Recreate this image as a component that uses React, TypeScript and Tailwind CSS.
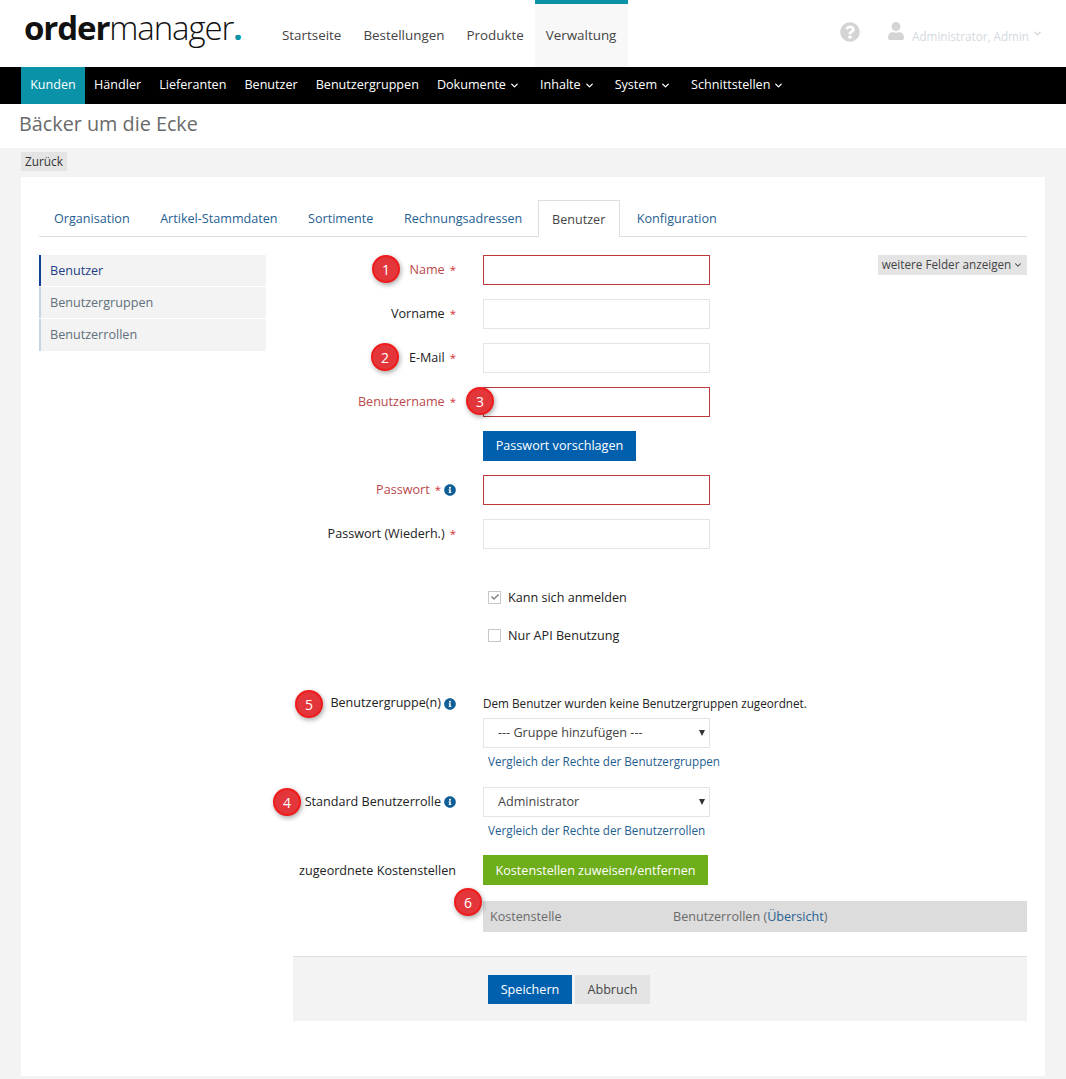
import React from "react";
import { FaQuestionCircle, FaUser, FaInfoCircle, FaCheck } from "react-icons/fa";
import { ChevronDown } from "lucide-react";

const topNav = ["Startseite", "Bestellungen", "Produkte"];
const blackNav: [string, boolean][] = [
  ["Händler", false],
  ["Lieferanten", false],
  ["Benutzer", false],
  ["Benutzergruppen", false],
  ["Dokumente", true],
  ["Inhalte", true],
  ["System", true],
  ["Schnittstellen", true],
];
const tabs = ["Organisation", "Artikel-Stammdaten", "Sortimente", "Rechnungsadressen"];

function Badge({ n, className }: { n: number; className: string }) {
  return (
    <span
      className={`absolute flex h-[28px] w-[28px] items-center justify-center rounded-full border-[2px] border-[#f01c1c] bg-[#e2363b] text-[14px] text-white shadow-[1px_2px_5px_rgba(0,0,0,0.35)] ${className}`}
    >
      {n}
    </span>
  );
}

function Info() {
  return <FaInfoCircle className="inline-block text-[12px] text-[#0f5f96]" />;
}

function Field({
  label,
  error,
  info,
  badge,
}: {
  label: string;
  error?: boolean;
  info?: boolean;
  badge?: React.ReactNode;
}) {
  return (
    <div className="relative flex h-[30px] items-center">
      <div className={`flex w-[163px] items-center justify-end ${error ? "text-[#b9484b]" : "text-[#222]"}`}>
        <span>{label}</span>
        <span className="ml-[5px] text-[11.5px] text-[#d0343a]">*</span>
        {info && <span className="ml-[3px] flex"><Info /></span>}
      </div>
      <input
        className={`ml-[27px] h-[30px] w-[227px] border bg-white ${error ? "border-[#b9393c]" : "border-[#e4e4e4]"}`}
      />
      {badge}
    </div>
  );
}

function Select({ value }: { value: string }) {
  return (
    <div className="relative h-[30px] w-[227px]">
      <select className="h-full w-full appearance-none border border-[#e4e4e4] bg-white pl-[14px] text-[12.6px] text-[#444]">
        <option>{value}</option>
      </select>
      <span className="absolute right-[5px] top-[12px] h-0 w-0 border-x-[3px] border-t-[6px] border-x-transparent border-t-[#333]" />
    </div>
  );
}

function Check({ checked, label }: { checked?: boolean; label: string }) {
  return (
    <div className="ml-[190px] flex h-[20px] items-center">
      <span className="ml-[5px] flex h-[13px] w-[13px] items-center justify-center border border-[#c8c8c8] bg-white">
        {checked && <FaCheck className="text-[8px] text-[#888]" />}
      </span>
      <span className="ml-[7px] pt-[2px] text-[#222]">{label}</span>
    </div>
  );
}

export default function App() {
  return (
    <div className="min-h-[1079px] bg-[#f3f3f3] text-[12.6px] text-[#222] [font-family:'Open_Sans',sans-serif]">
      <header className="flex h-[67px] items-stretch bg-white">
        <div className="ml-[24px] mt-[8px] w-[218px] whitespace-nowrap text-[33px] leading-[40px] tracking-[-1.1px] text-[#111] [font-family:'Open_Sans',sans-serif]">
          <span className="font-bold">order</span>
          <span className="font-light">manager</span>
          <span className="font-bold text-[#0a93a8]">.</span>
        </div>
        <nav className="ml-[40px] flex text-[13.4px] text-[#444]">
          {topNav.map((t) => (
            <a key={t} className="mr-[22px] pt-[25px]">
              {t}
            </a>
          ))}
          <a className="-ml-[11px] w-[93px] border-t-[4px] border-[#0a93a8] bg-[#f8f8f8] pl-[11px] pt-[21px]">Verwaltung</a>
        </nav>
        <div className="ml-auto mr-[23px] flex items-start pt-[21px] text-[#d4d4d4]">
          <FaQuestionCircle className="mt-[1px] text-[20px]" />
          <FaUser className="ml-[27px] mt-[1px] text-[18px]" />
          <span className="ml-[7px] mt-[7px] text-[11.7px] text-[#d4d9de]">Administrator, Admin</span>
          <ChevronDown size={11} strokeWidth={3} className="ml-[3px] mt-[7px]" />
        </div>
      </header>

      <nav className="flex h-[37px] items-stretch bg-black pl-[21px] text-white">
        <a className="flex w-[64px] items-center justify-center bg-[#0a93a8]">Kunden</a>
        <div className="ml-[9px] flex items-center gap-[18px]">
          {blackNav.map(([t, c]) => (
            <a key={t} className={`flex items-center gap-[3px] ${c ? "mr-[2px]" : ""}`}>
              {t}
              {c && <ChevronDown size={11} strokeWidth={3} />}
            </a>
          ))}
        </div>
      </nav>

      <div className="flex h-[44px] items-center bg-white pb-[4px] pl-[19px] text-[19.8px] text-[#6a6a6a]">Bäcker um die Ecke</div>

      <div className="px-[21px] pt-[4px]">
        <button className="block h-[19px] w-[46px] bg-[#e4e4e4] text-[11.8px] text-[#333]">Zurück</button>

        <main className="mt-[6px] h-[899px] bg-white px-[18px] pt-[23px]">
          <div className="flex h-[37px] items-stretch border-b border-[#dedede] pl-[15px] text-[#1f6091]">
            {tabs.map((t) => (
              <a key={t} className="mr-[30.5px] flex items-center pt-[2px]">
                {t}
              </a>
            ))}
            <a className="-ml-[15px] flex h-[37px] w-[82px] items-center justify-center border border-b-0 border-[#dedede] bg-white pt-[2px] text-[#444]">
              Benutzer
            </a>
            <a className="ml-[17px] flex items-center pt-[2px]">Konfiguration</a>
          </div>

          <div className="mt-[18px] flex">
            <aside className="flex h-[96px] w-[227px] flex-col gap-[1px]">
              <a className="flex h-[31px] items-center border-l-[2px] border-[#0d3f94] bg-[#f3f3f3] pl-[9px] pt-[2px] text-[#1c3f83]">Benutzer</a>
              <a className="flex h-[31px] items-center border-l-[2px] border-[#c6d5e2] bg-[#f3f3f3] pl-[9px] pt-[2px] text-[#5f6f7c]">Benutzergruppen</a>
              <a className="flex h-[32px] items-center border-l-[2px] border-[#c6d5e2] bg-[#f3f3f3] pl-[9px] text-[#5f6f7c]">Benutzerrollen</a>
            </aside>

            <form className="ml-[27px] flex w-[734px] flex-col">
              <div className="relative">
                <Field label="Name" error badge={<Badge n={1} className="left-[79px] top-0" />} />
                <button
                  type="button"
                  className="absolute right-0 top-0 flex h-[20px] w-[149px] items-center justify-center gap-[2px] bg-[#e4e4e4] text-[11.7px] text-[#444]"
                >
                  weitere Felder anzeigen <ChevronDown size={10} strokeWidth={2.5} />
                </button>
              </div>
              <div className="mt-[14px]">
                <Field label="Vorname" />
              </div>
              <div className="mt-[14px]">
                <Field label="E-Mail" badge={<Badge n={2} className="left-[78px] top-0" />} />
              </div>
              <div className="mt-[14px]">
                <Field label="Benutzername" error badge={<Badge n={3} className="left-[173px] top-0" />} />
              </div>
              <button
                type="button"
                className="ml-[190px] mt-[14px] h-[30px] w-[153px] bg-[#0060ae] text-white"
              >
                Passwort vorschlagen
              </button>
              <div className="mt-[14px]">
                <Field label="Passwort" error info />
              </div>
              <div className="mt-[14px]">
                <Field label="Passwort (Wiederh.)" />
              </div>

              <div className="mt-[38px]">
                <Check checked label="Kann sich anmelden" />
              </div>
              <div className="mt-[18px]">
                <Check label="Nur API Benutzung" />
              </div>

              <div className="relative mt-[48px] flex">
                <div className="flex h-[20px] w-[163px] items-center justify-end gap-[3px] pt-[1px]">
                  Benutzergruppe(n) <Info />
                </div>
                <div className="ml-[27px] flex flex-col">
                  <p className="flex h-[20px] items-center whitespace-nowrap pt-[2px] text-[11.72px] text-[#222]">
                    Dem Benutzer wurden keine Benutzergruppen zugeordnet.
                  </p>
                  <div className="mt-[5px]">
                    <Select value="--- Gruppe hinzufügen ---" />
                  </div>
                  <a className="ml-[5px] mt-[5px] text-[11.7px] leading-[17px] text-[#1f6091]">Vergleich der Rechte der Benutzergruppen</a>
                </div>
                <Badge n={5} className="left-[2px] -top-[3px]" />
              </div>

              <div className="relative mt-[17px] flex">
                <div className="flex h-[30px] w-[163px] items-center justify-end gap-[3px] whitespace-nowrap">
                  Standard Benutzerrolle <Info />
                </div>
                <div className="ml-[27px] flex flex-col">
                  <Select value="Administrator" />
                  <a className="ml-[5px] mt-[5px] text-[11.7px] leading-[17px] text-[#1f6091]">Vergleich der Rechte der Benutzerrollen</a>
                </div>
                <Badge n={4} className="-left-[20px] top-[1px]" />
              </div>

              <div className="relative mt-[16px] flex">
                <div className="flex h-[30px] w-[163px] items-center justify-end whitespace-nowrap pt-[2px]">zugeordnete Kostenstellen</div>
                <button type="button" className="ml-[27px] h-[30px] w-[225px] bg-[#6fae1b] pt-[2px] text-white">
                  Kostenstellen zuweisen/entfernen
                </button>
              </div>

              <div className="relative ml-[190px] mt-[16px] flex h-[31px] items-center bg-[#dcdcdc] pl-[7px] pt-[2px] text-[#6b6b6b]">
                <span className="w-[183px]">Kostenstelle</span>
                <span>
                  Benutzerrollen (<a className="text-[#1f6091]">Übersicht</a>)
                </span>
                <Badge n={6} className="-left-[29px] -top-[13px]" />
              </div>

              <div className="mt-[24px] flex h-[65px] items-center gap-[3px] border-t border-[#dedede] bg-[#f3f3f3] pl-[195px]">
                <button type="button" className="h-[29px] w-[84px] bg-[#0060ae] pt-[2px] text-white">
                  Speichern
                </button>
                <button type="button" className="h-[29px] w-[75px] bg-[#e4e4e4] pt-[2px] text-[#444]">
                  Abbruch
                </button>
              </div>
            </form>
          </div>
        </main>
      </div>
    </div>
  );
}
